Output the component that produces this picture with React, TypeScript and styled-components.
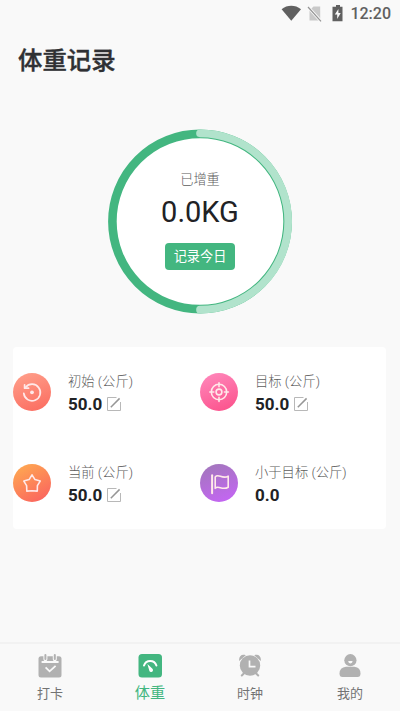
import React from "react";
import styled, { createGlobalStyle, css } from "styled-components";

const GlobalStyle = createGlobalStyle`
  * { box-sizing: border-box; }
  body { margin: 0; background: #f9f9f9; }
`;

const Screen = styled.div`
  width: 400px;
  height: 711px;
  display: flex;
  flex-direction: column;
  overflow: hidden;
  background: #f9f9f9;
  font-family: Roboto, "Noto Sans CJK SC", sans-serif;
  color: #212225;
`;

const StatusBar = styled.div`
  height: 28px;
  padding-right: 9px;
  display: flex;
  align-items: center;
  justify-content: flex-end;
  svg { display: block; }
`;

const Clock = styled.span`
  margin-left: 7px;
  font-size: 16px;
  line-height: 28px;
  font-weight: 500;
  color: #606060;
`;

const Title = styled.h1`
  margin: 15px 0 0 18px;
  height: 36px;
  font-size: 24.4px;
  line-height: 36px;
  font-weight: 500;
  -webkit-text-stroke: 0.4px #2f3033;
  color: #2f3033;
`;

const RingArea = styled.div`
  margin: 50px auto 0;
  width: 186px;
  height: 186px;
  display: grid;
  > * { grid-area: 1 / 1; }
`;

const RingContent = styled.div`
  display: flex;
  flex-direction: column;
  align-items: center;
  padding-top: 41px;
  z-index: 1;
`;

const Caption = styled.div`
  font-size: 13.2px;
  line-height: 20px;
  font-weight: 300;
  color: #5c5c5c;
`;

const Weight = styled.div`
  margin-top: 4px;
  font-size: 29px;
  line-height: 36px;
`;

const RecordButton = styled.button`
  margin-top: 13px;
  width: 70px;
  height: 27px;
  padding: 1px 0 0;
  border: 0;
  border-radius: 4px;
  background: #43b680;
  color: #fff;
  font: inherit;
  font-size: 13.2px;
  line-height: 26px;
`;

const Card = styled.section`
  margin: 32px 14px 0 13px;
  height: 182px;
  display: grid;
  grid-template-columns: 187px 186px;
  grid-template-rows: 91px 91px;
  background: #fff;
  border-radius: 4px;
`;

const Metric = styled.div`
  display: flex;
  align-items: flex-start;
  padding-top: 26px;
`;

const Badge = styled.div<{ $fill: string }>`
  width: 38px;
  height: 38px;
  border-radius: 50%;
  background: ${(p) => p.$fill};
  svg { display: block; }
`;

const MetricText = styled.div`
  margin: -2px 0 0 17px;
`;

const MetricLabel = styled.div`
  font-size: 13.3px;
  line-height: 22px;
  font-weight: 300;
  color: #5c5c5c;
  white-space: nowrap;
`;

const MetricValue = styled.div`
  display: flex;
  align-items: center;
  height: 22px;
  gap: 5px;
  font-size: 17px;
  font-weight: 700;
`;

const TabBar = styled.nav`
  margin-top: auto;
  height: 69px;
  border-top: 2px solid #f2f2f2;
  display: grid;
  grid-template-columns: repeat(4, 100px);
`;

const Tab = styled.div<{ $active?: boolean }>`
  display: flex;
  flex-direction: column;
  align-items: center;
  padding-top: 9px;
  font-size: 13px;
  line-height: 31px;
  color: #737373;
  svg { display: block; }
  ${(p) => p.$active && css`
    font-size: 15.2px;
    line-height: 31px;
    color: #43b680;
  `}
`;

const glyph = {
  fill: "none",
  stroke: "#ffe9e9",
  strokeWidth: 1.6,
  strokeLinecap: "round" as const,
  strokeLinejoin: "round" as const,
};

const EditIcon = () => (
  <svg width="14" height="14" viewBox="0 0 14 14" fill="none" stroke="#b8b8b8">
    <path d="M9.5 .5H.5v13h13V5" />
    <path d="M3.800 10.200l8.800-8.800" stroke="#969696" strokeWidth="1.500" />
  </svg>
);

const ResetIcon = () => (
  <svg width="38" height="38" {...glyph} strokeWidth={1.7}>
    <path d="M12.600 14.300A8.300 8.300 0 1 1 10.800 20.400" />
    <path d="M11.600 11.800v3.400h4" />
    <circle cx="19" cy="19.300" r="1.900" fill="#ffe9e9" stroke="none" />
  </svg>
);

const TargetIcon = () => (
  <svg width="38" height="38" {...glyph}>
    <circle cx="19" cy="19" r="7.700" />
    <circle cx="19" cy="19" r="2.900" />
    <path d="M19 9.800v4M19 24.400v4M9.800 19h4M24.400 19h4" />
  </svg>
);

const StarIcon = () => (
  <svg width="38" height="38" {...glyph}>
    <path d="M19 10.800L22 15.600L27.200 17.100L24.400 21.600L24.300 27.100L19 26.800L13.800 27.100L13.600 21.600L10.800 17.100L16.100 15.600Z" />
  </svg>
);

const FlagIcon = () => (
  <svg width="38" height="38" {...glyph}>
    <path d="M12.100 11.300v18" strokeWidth="2" />
    <path d="M15.200 12.900C18.500 9 22 15.800 28.200 12.200V23.200C22 27 18.500 20.500 15.200 24.300Z" />
  </svg>
);

const CalendarIcon = () => (
  <svg width="26" height="25" fill="none">
    <path d="M4 3.200h18q2.500 0 2.500 2.500V22q0 2.500-2.500 2.500H4Q1.500 24.500 1.500 22V5.700Q1.500 3.200 4 3.200Z" fill="#b1b1b1" />
    <path d="M8.400 1.800v4.400M17.800 1.800v4.400" stroke="#f9f9f9" strokeWidth="4" strokeLinecap="round" />
    <path d="M8.400 2v4M17.800 2v4" stroke="#b1b1b1" strokeWidth="2" strokeLinecap="round" />
    <path d="M4.600 9h17M8.600 14.300l4 4 6-5.500" stroke="#f9f9f9" strokeWidth="1.800" />
  </svg>
);

const GaugeIcon = () => (
  <svg width="26" height="25" fill="none">
    <rect x="1.500" y="1" width="23.500" height="23.500" rx="3.500" fill="#43b680" />
    <path d="M7 12.500A6.500 6.500 0 0 1 19.400 12.500" stroke="#fff" strokeWidth="2" strokeLinecap="round" />
    <path d="M10.400 11L15.200 15.600A1.900 1.900 0 1 1 12.200 17.300Z" fill="#fff" />
  </svg>
);

const AlarmIcon = () => (
  <svg width="26" height="25" fill="#b1b1b1">
    <path d="M2.200 8C1.500 3.500 4.500 .500 8.800 2.200ZM23.800 8C24.500 3.500 21.500 .500 17.200 2.200Z" />
    <path d="M7.300 20l-2.500 2.500M18.700 20l2.500 2.500" stroke="#b1b1b1" strokeWidth="2" strokeLinecap="round" />
    <circle cx="13" cy="12.500" r="10.200" />
    <path d="M12.500 7.500v6.200h6" fill="none" stroke="#f9f9f9" strokeWidth="1.700" />
  </svg>
);

const PersonIcon = () => (
  <svg width="26" height="25" fill="#b1b1b1">
    <circle cx="13.400" cy="7.200" r="6.100" />
    <path d="M11.200 8a2.200 2.400 0 0 0 4.400 0Z" fill="#f9f9f9" />
    <path d="M9 13.700h8.500Q23.500 14.500 23.500 20.500 23.500 24 20.500 24H5.500Q2.500 24 2.500 20.500 2.500 14.500 9 13.700Z" />
  </svg>
);

const StatusIcons = () => (
  <svg width="62" height="20" viewBox="0 0 62 20">
    <path d="M10.300 16.800L.600 5.200C6.200 .600 14.200 .600 20 5.200Z" fill="#606060" />
    <path d="M32.500 2.500H39.200V16.500H28.500V6.500Z" fill="#c9c9c9" />
    <path d="M27 3L40 17.300" stroke="#f9f9f9" strokeWidth="3" />
    <path d="M27 3L40 17.300" stroke="#949494" strokeWidth="1.200" />
    <path d="M55 1h4v1.700h2.500V17.300H51.500V2.700H55Z" fill="#606060" />
    <path d="M57.400 5l-3.600 5.600h2.400v4.400l3.500-6h-2.300Z" fill="#f9f9f9" />
  </svg>
);

const Ring = () => (
  <svg width="186" height="186">
    <circle cx="93" cy="92.500" r="87.600" fill="#fff" stroke="#43b680" strokeWidth="8.600" />
    <path d="M93 4.300A88.200 88.200 0 0 1 93 180.700" fill="none" stroke="#b1e3cc" strokeWidth="7.700" strokeLinecap="round" />
  </svg>
);

const metrics = [
  { label: "初始 (公斤)", value: "50.0", icon: <ResetIcon />, fill: "linear-gradient(160deg, #ffa18c, #fb6a5e)", editable: true },
  { label: "目标 (公斤)", value: "50.0", icon: <TargetIcon />, fill: "linear-gradient(160deg, #ff8abd, #fb4f89)", editable: true },
  { label: "当前 (公斤)", value: "50.0", icon: <StarIcon />, fill: "linear-gradient(150deg, #ffae50, #fa5d60)", editable: true },
  { label: "小于目标 (公斤)", value: "0.0", icon: <FlagIcon />, fill: "linear-gradient(160deg, #a078b8, #c764f8)", editable: false },
];

const tabs = [
  { label: "打卡", icon: <CalendarIcon /> },
  { label: "体重", icon: <GaugeIcon />, active: true },
  { label: "时钟", icon: <AlarmIcon /> },
  { label: "我的", icon: <PersonIcon /> },
];

export default function App() {
  return (
    <Screen>
      <GlobalStyle />
      <StatusBar>
        <StatusIcons />
        <Clock>12:20</Clock>
      </StatusBar>
      <Title>体重记录</Title>
      <RingArea>
        <Ring />
        <RingContent>
          <Caption>已增重</Caption>
          <Weight>0.0KG</Weight>
          <RecordButton>记录今日</RecordButton>
        </RingContent>
      </RingArea>
      <Card>
        {metrics.map((m) => (
          <Metric key={m.label}>
            <Badge $fill={m.fill}>{m.icon}</Badge>
            <MetricText>
              <MetricLabel>{m.label}</MetricLabel>
              <MetricValue>
                {m.value}
                {m.editable && <EditIcon />}
              </MetricValue>
            </MetricText>
          </Metric>
        ))}
      </Card>
      <TabBar>
        {tabs.map((t) => (
          <Tab key={t.label} $active={t.active}>
            {t.icon}
            {t.label}
          </Tab>
        ))}
      </TabBar>
    </Screen>
  );
}
